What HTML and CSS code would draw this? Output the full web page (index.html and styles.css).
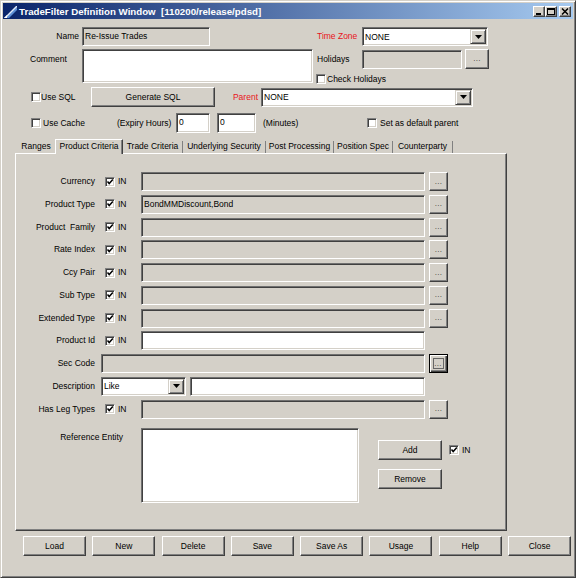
FILE: index.html
```html
<!DOCTYPE html>
<html>
<head>
<meta charset="utf-8">
<link rel="stylesheet" href="styles.css">
</head>
<body>
<div class="window">
  <div class="titlebar">
    <svg class="app-icon" width="13" height="13" viewBox="0 0 13 13">
      <polygon points="0,13 12,1 13,1 13,4 4,13" fill="#dfe9f8"/>
      <polygon points="2,13 13,2 13,5 5,13" fill="#5d8fd6"/>
      <polygon points="0,13 3,10 3,13" fill="#ffffff"/>
    </svg>
    <span class="title">TradeFilter Definition Window&nbsp; [110200/release/pdsd]</span>
    <div class="caption">
      <span class="cbtn"><svg width="8" height="7" viewBox="0 0 8 7"><rect x="1" y="5" width="5" height="2" fill="#000"/></svg></span>
      <span class="cbtn"><svg width="8" height="7" viewBox="0 0 8 7"><rect x="0.5" y="0.5" width="7" height="6" fill="none" stroke="#000"/><rect x="0" y="0" width="8" height="2" fill="#000"/></svg></span>
      <span class="cbtn close"><svg width="8" height="7" viewBox="0 0 8 7"><path d="M1 0.5 L7 6.5 M7 0.5 L1 6.5" stroke="#000" stroke-width="1.5"/></svg></span>
    </div>
  </div>

  <div class="client">
    <div class="row r1">
      <span class="lbl name-lbl">Name</span>
      <div class="field disabled name-field">Re-Issue Trades</div>
      <span class="lbl red tz-lbl">Time Zone</span>
      <div class="combo tz-combo"><span class="combo-text">NONE</span><span class="drop"><svg width="7" height="4" viewBox="0 0 7 4"><polygon points="0,0 7,0 3.5,4" fill="#000"/></svg></span></div>
    </div>

    <div class="row r2">
      <span class="lbl comment-lbl">Comment</span>
      <div class="field textarea"></div>
      <div class="rcol">
        <div class="hol-row">
          <span class="lbl hol-lbl">Holidays</span>
          <div class="field disabled hol-field"></div>
          <span class="btn dots hol-dots">...</span>
        </div>
        <div class="chk-row">
          <span class="cb"></span><span class="lbl">Check Holidays</span>
        </div>
      </div>
    </div>

    <div class="row r3">
      <div class="chk-wrap sql-wrap"><span class="cb"></span><span class="lbl">Use SQL</span></div>
      <span class="btn gen-btn">Generate SQL</span>
      <span class="lbl red parent-lbl">Parent</span>
      <div class="combo parent-combo"><span class="combo-text">NONE</span><span class="drop"><svg width="7" height="4" viewBox="0 0 7 4"><polygon points="0,0 7,0 3.5,4" fill="#000"/></svg></span></div>
    </div>

    <div class="row r4">
      <div class="chk-wrap cache-wrap"><span class="cb"></span><span class="lbl cache-lbl">Use Cache</span></div>
      <span class="lbl expiry-lbl">(Expiry Hours)</span>
      <div class="field hours-field">0</div>
      <div class="field minutes-field">0</div>
      <span class="lbl minutes-lbl">(Minutes)</span>
      <span class="cb"></span><span class="lbl default-lbl">Set as default parent</span>
    </div>

    <div class="tabs">
      <span class="tab t-ranges">Ranges</span>
      <span class="tab selected t-pc">Product Criteria</span>
      <span class="tab t-tc">Trade Criteria</span>
      <span class="tab t-us">Underlying Security</span>
      <span class="tab t-pp">Post Processing</span>
      <span class="tab t-ps">Position Spec</span>
      <span class="tab t-cp">Counterparty</span>
    </div>

    <div class="panel">
      <div class="prow">
        <span class="plbl">Currency</span>
        <span class="cb on"><svg width="8" height="8" viewBox="0 0 8 8"><polyline points="1.5,3.5 3.2,5.5 6.8,1.6" fill="none" stroke="#000" stroke-width="1.5"/></svg></span><span class="in">IN</span>
        <div class="field disabled wide"></div>
        <span class="btn dots">...</span>
      </div>
      <div class="prow">
        <span class="plbl">Product Type</span>
        <span class="cb on"><svg width="8" height="8" viewBox="0 0 8 8"><polyline points="1.5,3.5 3.2,5.5 6.8,1.6" fill="none" stroke="#000" stroke-width="1.5"/></svg></span><span class="in">IN</span>
        <div class="field disabled wide">BondMMDiscount,Bond</div>
        <span class="btn dots">...</span>
      </div>
      <div class="prow">
        <span class="plbl">Product&nbsp; Family</span>
        <span class="cb on"><svg width="8" height="8" viewBox="0 0 8 8"><polyline points="1.5,3.5 3.2,5.5 6.8,1.6" fill="none" stroke="#000" stroke-width="1.5"/></svg></span><span class="in">IN</span>
        <div class="field disabled wide"></div>
        <span class="btn dots">...</span>
      </div>
      <div class="prow">
        <span class="plbl">Rate Index</span>
        <span class="cb on"><svg width="8" height="8" viewBox="0 0 8 8"><polyline points="1.5,3.5 3.2,5.5 6.8,1.6" fill="none" stroke="#000" stroke-width="1.5"/></svg></span><span class="in">IN</span>
        <div class="field disabled wide"></div>
        <span class="btn dots">...</span>
      </div>
      <div class="prow">
        <span class="plbl">Ccy Pair</span>
        <span class="cb on"><svg width="8" height="8" viewBox="0 0 8 8"><polyline points="1.5,3.5 3.2,5.5 6.8,1.6" fill="none" stroke="#000" stroke-width="1.5"/></svg></span><span class="in">IN</span>
        <div class="field disabled wide"></div>
        <span class="btn dots">...</span>
      </div>
      <div class="prow">
        <span class="plbl">Sub Type</span>
        <span class="cb on"><svg width="8" height="8" viewBox="0 0 8 8"><polyline points="1.5,3.5 3.2,5.5 6.8,1.6" fill="none" stroke="#000" stroke-width="1.5"/></svg></span><span class="in">IN</span>
        <div class="field disabled wide"></div>
        <span class="btn dots">...</span>
      </div>
      <div class="prow">
        <span class="plbl">Extended Type</span>
        <span class="cb on"><svg width="8" height="8" viewBox="0 0 8 8"><polyline points="1.5,3.5 3.2,5.5 6.8,1.6" fill="none" stroke="#000" stroke-width="1.5"/></svg></span><span class="in">IN</span>
        <div class="field disabled wide"></div>
        <span class="btn dots">...</span>
      </div>
      <div class="prow">
        <span class="plbl">Product Id</span>
        <span class="cb on"><svg width="8" height="8" viewBox="0 0 8 8"><polyline points="1.5,3.5 3.2,5.5 6.8,1.6" fill="none" stroke="#000" stroke-width="1.5"/></svg></span><span class="in">IN</span>
        <div class="field wide"></div>
      </div>
      <div class="prow">
        <span class="plbl">Sec Code</span>
        <div class="field disabled sec-field"></div>
        <span class="btn dots focused"><span class="focus-box">...</span></span>
      </div>
      <div class="prow">
        <span class="plbl">Description</span>
        <div class="combo desc-combo"><span class="combo-text">Like</span><span class="drop"><svg width="7" height="4" viewBox="0 0 7 4"><polygon points="0,0 7,0 3.5,4" fill="#000"/></svg></span></div>
        <div class="field desc-field"></div>
      </div>
      <div class="prow">
        <span class="plbl">Has Leg Types</span>
        <span class="cb on"><svg width="8" height="8" viewBox="0 0 8 8"><polyline points="1.5,3.5 3.2,5.5 6.8,1.6" fill="none" stroke="#000" stroke-width="1.5"/></svg></span><span class="in">IN</span>
        <div class="field disabled wide"></div>
        <span class="btn dots">...</span>
      </div>

      <div class="ref-row">
        <span class="plbl ref-lbl">Reference Entity</span>
        <div class="field listbox"></div>
        <div class="ref-btns">
          <div class="add-row">
            <span class="btn small-btn">Add</span>
            <span class="cb on"><svg width="8" height="8" viewBox="0 0 8 8"><polyline points="1.5,3.5 3.2,5.5 6.8,1.6" fill="none" stroke="#000" stroke-width="1.5"/></svg></span><span class="lbl ref-in">IN</span>
          </div>
          <span class="btn small-btn remove-btn">Remove</span>
        </div>
      </div>
    </div>

    <div class="footer">
      <span class="btn fbtn">Load</span>
      <span class="btn fbtn">New</span>
      <span class="btn fbtn">Delete</span>
      <span class="btn fbtn">Save</span>
      <span class="btn fbtn">Save As</span>
      <span class="btn fbtn">Usage</span>
      <span class="btn fbtn">Help</span>
      <span class="btn fbtn">Close</span>
    </div>
  </div>
</div>
</body>
</html>
```

FILE: styles.css
```css
* { box-sizing: border-box; margin: 0; padding: 0; }
html, body { width: 576px; height: 578px; overflow: hidden; background: #d4d0c8; }
body {
  font-family: "Liberation Sans", Arial, sans-serif;
  font-size: 8.5px;
  line-height: 11px;
  color: #000;
}

.window {
  width: 576px;
  height: 578px;
  border: 1px solid;
  border-color: #d4d0c8 #404040 #404040 #d4d0c8;
  box-shadow: inset 1px 1px 0 #fff, inset -1px -1px 0 #808080;
  padding: 2px;
  background: #d4d0c8;
  display: flex;
  flex-direction: column;
}

/* title bar */
.titlebar {
  flex: none;
  height: 16px;
  background: linear-gradient(to right, #0a246a, #a6caf0);
  display: flex;
  align-items: center;
  padding-left: 1px;
  color: #fff;
}
.app-icon { flex: none; margin-right: 2px; display: block; }
.title { font-weight: bold; font-size: 9.7px; white-space: nowrap; }
.caption { margin-left: auto; margin-right: 2px; display: flex; }
.cbtn {
  width: 12px;
  height: 11px;
  background: #d4d0c8;
  border: 1px solid;
  border-color: #fff #404040 #404040 #fff;
  box-shadow: inset -1px -1px 0 #808080;
  display: flex;
  align-items: center;
  justify-content: center;
}
.cbtn svg { display: block; }
.cbtn.close { margin-left: 2px; }

/* client */
.client { flex: 1; display: flex; flex-direction: column; }
.row { display: flex; flex: none; }
.lbl { white-space: nowrap; flex: none; }
.red { color: #e8141a; }

.field {
  flex: none;
  height: 19px;
  background: #fff;
  border: 1px solid;
  border-color: #707070 #fff #fff #707070;
  box-shadow: inset 1px 1px 0 #404040, inset -1px -1px 0 #d4d0c8;
  padding: 3px 2px 0 2px;
  white-space: nowrap;
  overflow: hidden;
}
.field.disabled { background: #d4d0c8; }

.combo {
  flex: none;
  height: 19px;
  background: #fff;
  border: 1px solid;
  border-color: #707070 #fff #fff #707070;
  box-shadow: inset 1px 1px 0 #404040, inset -1px -1px 0 #d4d0c8;
  padding: 1px;
  display: flex;
  align-items: center;
}
.combo-text { padding-left: 1px; padding-top: 1px; }
.drop {
  margin-left: auto;
  width: 16px;
  height: 15px;
  background: #d4d0c8;
  border: 1px solid;
  border-color: #d4d0c8 #404040 #404040 #d4d0c8;
  box-shadow: inset 1px 1px 0 #fff, inset -1px -1px 0 #808080;
  display: flex;
  align-items: center;
  justify-content: center;
}
.drop svg { display: block; }

.btn {
  flex: none;
  background: #d4d0c8;
  border: 1px solid;
  border-color: #fff #404040 #404040 #fff;
  box-shadow: inset -1px -1px 0 #808080;
  display: flex;
  align-items: center;
  justify-content: center;
  white-space: nowrap;
}
.dots { width: 19px; height: 19px; font-size: 8px; color: #333; padding-bottom: 1px; letter-spacing: 0.3px; }
.dots.focused {
  border-color: #000;
  box-shadow: inset 1px 1px 0 #fff, inset -1px -1px 0 #404040, inset -2px -2px 0 #808080;
  padding: 0;
}
.focus-box {
  width: 11px;
  height: 11px;
  border: 1px solid #666;
  display: flex;
  align-items: center;
  justify-content: center;
  padding-bottom: 1px;
  margin-right: 1px;
}

.cb {
  flex: none;
  width: 10px;
  height: 10px;
  background: #fff;
  border: 1px solid;
  border-color: #808080 #fff #fff #808080;
  box-shadow: inset 1px 1px 0 #404040, inset -1px -1px 0 #d4d0c8;
  display: block;
}
.cb svg { display: block; }

/* row 1 */
.r1 { height: 19px; margin-top: 8px; align-items: center; }
.name-lbl { width: 79px; text-align: right; padding-right: 3px; }
.name-field { width: 128px; }
.tz-lbl { margin-left: 107px; width: 45px; }
.tz-combo { width: 126px; }

/* row 2 */
.r2 { margin-top: 3px; align-items: flex-start; }
.comment-lbl { width: 79px; padding-left: 27px; padding-top: 5px; }
.textarea { width: 231px; height: 34px; }
.rcol { margin-left: 4px; display: flex; flex-direction: column; }
.hol-row { display: flex; align-items: center; height: 20px; }
.hol-lbl { width: 45px; }
.hol-field { width: 100px; }
.hol-dots { margin-left: 3px; width: 24px; height: 20px; }
.chk-row { display: flex; align-items: center; margin-top: 5px; margin-left: -1px; height: 10px; }
.chk-row .lbl { margin-left: 1px; }

/* row 3 */
.r3 { margin-top: 3px; height: 20px; align-items: center; }
.chk-wrap { flex: none; display: flex; align-items: center; margin-left: 28px; }
.sql-wrap { width: 60px; }
.sql-wrap .lbl { margin-left: 0; }
.gen-btn { width: 124px; height: 20px; }
.parent-lbl { width: 46px; text-align: right; padding-right: 3px; }
.parent-combo { width: 212px; }

/* row 4 */
.r4 { margin-top: 6px; height: 20px; align-items: center; }
.cache-wrap { width: 86px; }
.cache-lbl { margin-left: 2px; }
.expiry-lbl { width: 59px; }
.hours-field { width: 34px; height: 20px; }
.minutes-field { width: 39px; height: 20px; margin-left: 7px; }
.minutes-lbl { margin-left: 7px; width: 104px; }
.default-lbl { margin-left: 3px; }

/* tabs */
.tabs {
  flex: none;
  display: flex;
  align-items: flex-end;
  height: 14px;
  margin-top: 6px;
  margin-left: 14px;
}
.tab {
  flex: none;
  height: 12px;
  line-height: 11px;
  text-align: center;
  border-right: 1px solid #808080;
  white-space: nowrap;
}
.tab.selected {
  position: relative;
  z-index: 1;
  height: 15px;
  margin-bottom: -1px;
  background: #d4d0c8;
  border-top: 1px solid #fff;
  border-left: 1px solid #fff;
  border-right: 1px solid #404040;
  box-shadow: inset -1px 0 0 #808080;
  padding-top: 1px;
}
.t-ranges { width: 38px; border-right: none; }
.t-pc { width: 68px; }
.t-tc { width: 60px; }
.t-us { width: 83px; }
.t-pp { width: 68px; }
.t-ps { width: 59px; }
.t-cp { width: 60px; }

/* panel */
.panel {
  flex: none;
  margin-left: 12px;
  width: 492px;
  height: 378px;
  border: 1px solid;
  border-color: #fff #404040 #404040 #fff;
  box-shadow: inset -1px -1px 0 #808080;
  padding-top: 18px;
  display: flex;
  flex-direction: column;
}
.prow {
  flex: none;
  display: flex;
  align-items: center;
  height: 19px;
  margin-bottom: 3.75px;
}
.plbl { flex: none; width: 79px; text-align: right; white-space: nowrap; }
.prow .cb { margin-left: 10px; }
.in { flex: none; width: 26px; padding-left: 3px; }
.wide { width: 284px; }
.prow .dots { margin-left: 4px; }
.sec-field { margin-left: 6px; width: 324px; }
.desc-combo { margin-left: 6px; width: 85px; }
.desc-field { margin-left: 4px; width: 235px; }

.ref-row { flex: none; display: flex; align-items: flex-start; margin-top: 5.75px; }
.ref-lbl { width: 107px; padding-top: 4px; }
.listbox { margin-left: 18px; width: 218px; height: 75px; }
.ref-btns { margin-left: 19px; display: flex; flex-direction: column; }
.add-row { display: flex; align-items: center; margin-top: 12px; }
.small-btn { width: 64px; height: 20px; }
.add-row .cb { margin-left: 7px; }
.ref-in { margin-left: 3px; }
.remove-btn { margin-top: 9px; }

/* footer */
.footer {
  flex: none;
  display: flex;
  gap: 6.3px;
  margin-top: 5px;
  margin-left: 20px;
}
.fbtn { width: 63px; height: 20px; }
```
